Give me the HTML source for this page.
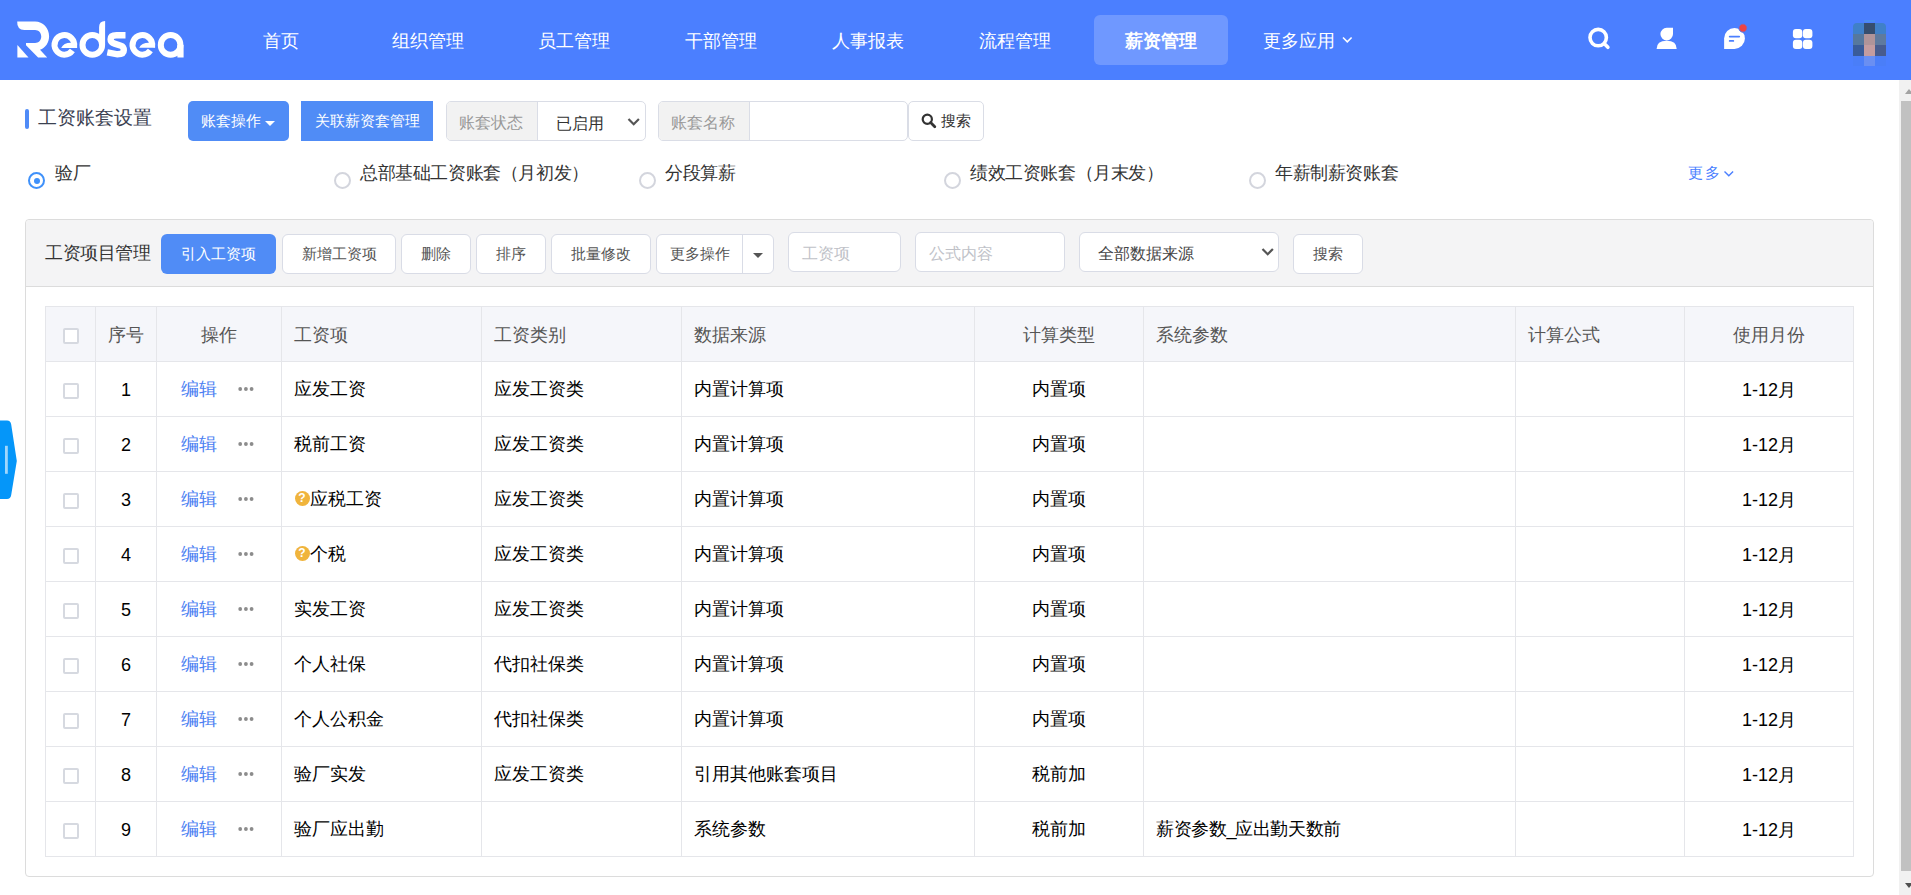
<!DOCTYPE html>
<html><head><meta charset="utf-8">
<style>
*{box-sizing:border-box;margin:0;padding:0}
html,body{width:1911px;height:895px;overflow:hidden;background:#fff;font-family:"Liberation Sans",sans-serif;}
.a{position:absolute;white-space:nowrap}
#hdr{position:absolute;left:0;top:0;width:1911px;height:80px;background:#4b7fff}
.nav{position:absolute;top:15px;height:50px;line-height:52px;font-size:18px;color:#fff;text-align:center;width:134px}
.nav.act{background:rgba(255,255,255,.2);border-radius:6px;font-weight:bold}
.btnp{position:absolute;background:#508cf6;color:#fff;font-size:15px;text-align:center}
.grp{position:absolute;border:1px solid #dadde6;border-radius:5px;background:#fff;overflow:hidden}
.addon{position:absolute;left:0;top:0;bottom:0;background:#f2f2f2;border-right:1px solid #dadde6;color:#999;font-size:16px;padding-top:2px}
.radio{position:absolute;width:17px;height:17px;border-radius:50%;border:2px solid #d3d5dd;background:#fff}
.radio.on{border-color:#3f91fa}
.radio.on:after{content:"";position:absolute;left:3.5px;top:3.5px;width:6px;height:6px;border-radius:50%;background:#3f91fa}
.rtxt{position:absolute;font-size:18px;color:#333;line-height:22px;letter-spacing:-0.4px}
#panel{position:absolute;left:25px;top:219px;width:1849px;height:658px;border:1px solid #dcdcdc;border-radius:4px;background:#fff}
#phead{position:absolute;left:0;top:0;width:1847px;height:67px;background:#f4f4f5;border-bottom:1px solid #dcdcdc;border-radius:4px 4px 0 0}
.btn{position:absolute;top:14px;height:40px;border:1px solid #d9dce6;border-radius:6px;background:#fff;color:#555;font-size:15px;line-height:38px;text-align:center}
.inp{position:absolute;top:12px;height:40px;border:1px solid #d9dce6;border-radius:6px;background:#fff;color:#c0c2c8;font-size:16px;line-height:42px}
table{position:absolute;left:45px;top:306px;border-collapse:collapse;table-layout:fixed}
td,th{border:1px solid #e5e6ea;height:55px;font-size:18px;color:#000;font-weight:normal;padding:0 0 0 12px;text-align:left}
th{background:#f5f6fa;color:#555;padding-top:2px}
td.c,th.c{text-align:center;padding:0}
th.c{padding-top:2px}
.cb{display:inline-block;width:16px;height:16px;border:2px solid #d6d9e0;border-radius:2px;background:#fff;vertical-align:middle;position:relative;top:1px}
.ed{color:#4a7ef2}
td.op{padding:0 0 0 24px}
.dots{display:inline-block;margin-left:21px;vertical-align:middle;position:relative;top:-1px}
.dots b{display:inline-block;width:4px;height:4px;border-radius:50%;background:#999;margin-right:1.5px;vertical-align:top}
.q{display:inline-block;width:15px;height:15px;border-radius:50%;background:#f0b43c;color:#fff;font-style:normal;font-weight:bold;font-size:12px;line-height:15px;text-align:center;vertical-align:middle;position:relative;top:-1.5px;margin-right:0;margin-left:-0.5px}
td.qi{padding-left:13px}
td.n{padding-top:2px}
</style></head><body>
<div id="hdr">
  <svg class="a" style="left:0;top:0" width="200" height="80" viewBox="0 0 200 80">
    <g fill="#fff">
      <path d="M17.2 21.4 H35.1 C43 21.4 49.1 27.8 49.1 36.2 C49.1 42.5 45.5 47.8 40 49.7 L47.2 57.6 H38.1 L26 45.3 V43 H35.1 C38.6 43 41.25 40.2 41.25 36.5 C41.25 32.8 38.6 30 35.1 30 H24.3 Q16.8 29.5 17.2 21.4 Z"/>
      <path d="M17.4 45 V57.6 H28.5 Z"/>
    </g>
    <g fill="none" stroke="#fff" stroke-width="6">
      <path d="M72.38 50.52 A9.8 9.8 0 1 1 73.94 46.94"/>
      <path d="M150.38 50.52 A9.8 9.8 0 1 1 151.94 46.94"/>
      <circle cx="92.3" cy="44.9" r="9.8"/>
      <circle cx="170.6" cy="44.9" r="9.8"/>
      <path d="M125.5 35.2 H116.5 Q110.6 35.2 110.6 39.3 Q110.6 42.4 114.5 43.6 L121 45.7 Q123.8 46.6 123.8 50.3 Q123.8 54.3 117.5 54.3 L107.3 52.4" stroke-width="6.4"/>
    </g>
    <g fill="#fff">
      <path d="M77.15 42.7 H70.9 Q63.5 42.7 61.2 47.9 H77.15 Z"/>
      <path d="M155.15 42.7 H148.9 Q141.5 42.7 139.2 47.8 H155.15 Z"/>
      <path d="M105.1 21 V45 H99.1 V27 Q99.1 21 105.1 21 Z"/>
      <rect x="177.4" y="44.9" width="6.2" height="12.6"/>
    </g>
  </svg>
  <div class="nav" style="left:214px">首页</div>
  <div class="nav" style="left:361px">组织管理</div>
  <div class="nav" style="left:507px">员工管理</div>
  <div class="nav" style="left:654px">干部管理</div>
  <div class="nav" style="left:801px">人事报表</div>
  <div class="nav" style="left:948px">流程管理</div>
  <div class="nav act" style="left:1094px">薪资管理</div>
  <div class="a" style="left:1262.5px;top:15px;line-height:52px;font-size:18px;color:#fff">更多应用</div>
  <svg class="a" style="left:1580px;top:15px" width="331" height="60" viewBox="1580 15 331 60">
    <g fill="none" stroke="#fff" stroke-width="3.6" stroke-linecap="round">
      <circle cx="1598.2" cy="37.6" r="8.2"/>
      <path d="M1604.4 43.8 L1607.9 47.3"/>
    </g>
    <g fill="#fff">
      <path d="M1673 27.8 V34.1 A6.3 6.3 0 1 1 1666.7 27.8 Z"/>
      <path d="M1656.6 48.9 Q1656.6 40.7 1666.6 40.7 Q1676.7 40.7 1676.7 48.9 Z"/>
      <path d="M1724.1 48.9 V38.4 A10.4 10.4 0 1 1 1734.5 48.9 Z"/>
      <rect x="1792.9" y="29.1" width="9.4" height="9.1" rx="3"/>
      <rect x="1802.9" y="29.1" width="9.5" height="9.1" rx="3"/>
      <rect x="1792.9" y="39.8" width="9.4" height="9.1" rx="3"/>
      <rect x="1802.9" y="39.8" width="9.5" height="9.1" rx="3"/>
    </g>
    <g fill="#4b7fff">
      <rect x="1728.8" y="35.7" width="11.3" height="1.8" rx=".9"/>
      <rect x="1728.8" y="40" width="5.4" height="1.8" rx=".9"/>
    </g>
    <circle cx="1743" cy="28" r="4.2" fill="#ee4343" stroke="#4b7fff" stroke-width="1"/>
  </svg>
  <svg class="a" style="left:1840px;top:15px" width="60" height="60" viewBox="1840 15 60 60">
    <defs><clipPath id="av"><rect x="1853" y="23" width="33" height="60" rx="4"/></clipPath></defs>
    <g clip-path="url(#av)">
      <rect x="1853" y="23" width="11" height="11" fill="#4080c8"/>
      <rect x="1864" y="23" width="11" height="11" fill="#364e6e"/>
      <rect x="1875" y="23" width="11" height="11" fill="#4080c8"/>
      <rect x="1853" y="34" width="11" height="11" fill="#56789e"/>
      <rect x="1864" y="34" width="11" height="11" fill="#b09499"/>
      <rect x="1875" y="34" width="11" height="11" fill="#5f7a9e"/>
      <rect x="1853" y="45" width="11" height="11" fill="#3a5c9a"/>
      <rect x="1864" y="45" width="11" height="11" fill="#c49ca0"/>
      <rect x="1875" y="45" width="11" height="11" fill="#485c8e"/>
      <rect x="1864" y="56" width="11" height="10" fill="#6a8ff2"/>
      <rect x="1853" y="56" width="11" height="10" fill="#4a7ef8"/>
      <rect x="1875" y="56" width="11" height="10" fill="#4a7ef8"/>
    </g>
    <rect x="1864" y="20" width="11" height="2" fill="#4d96e6" opacity=".6"/>
  </svg>
  <svg class="a" style="left:1342px;top:36px" width="11" height="9" viewBox="0 0 11 9"><path d="M1 1.5 L5.3 5.8 L9.6 1.5" fill="none" stroke="#fff" stroke-width="1.6"/></svg>
</div>

<div class="a" style="left:25px;top:109px;width:4px;height:20px;border-radius:2px;background:#4f8bf7"></div>
<div class="a" style="left:38px;top:106px;font-size:19px;line-height:24px;color:#3b4151">工资账套设置</div>
<div class="btnp" style="left:188px;top:101px;width:101px;height:40px;border-radius:5px;line-height:40px;text-align:left;padding-left:13px">账套操作</div>
<div class="a" style="left:265px;top:121px;width:0;height:0;border-left:5px solid transparent;border-right:5px solid transparent;border-top:5px solid #fff"></div>
<div class="btnp" style="left:301px;top:101px;width:132px;height:40px;line-height:40px">关联薪资套管理</div>

<div class="grp" style="left:446px;top:101px;width:200px;height:40px">
  <div class="addon" style="width:91px;line-height:38px;padding-left:12px">账套状态</div>
  <div class="a" style="left:108.5px;top:3px;line-height:38px;font-size:16px;color:#333">已启用</div>
  <svg class="a" style="left:180px;top:14.5px" width="14" height="10" viewBox="0 0 14 10"><path d="M1.5 2 L6.7 7.2 L11.9 2" fill="none" stroke="#555" stroke-width="2.2"/></svg>
</div>
<div class="grp" style="left:658px;top:101px;width:250px;height:40px">
  <div class="addon" style="width:91px;line-height:38px;padding-left:12px">账套名称</div>
</div>
<div class="grp" style="left:908px;top:101px;width:76px;height:40px">
  <svg class="a" style="left:12px;top:11px" width="16" height="16" viewBox="0 0 16 16"><circle cx="6.3" cy="6.3" r="4.6" fill="none" stroke="#333" stroke-width="2.2"/><path d="M9.6 9.6 L13.8 13.8" stroke="#333" stroke-width="2.8" stroke-linecap="round"/></svg>
  <div class="a" style="left:32px;top:0;line-height:38px;font-size:15px;color:#333">搜索</div>
</div>

<div class="radio on" style="left:28px;top:172px"></div>
<div class="rtxt" style="left:55px;top:162px">验厂</div>
<div class="radio" style="left:334px;top:172px"></div>
<div class="rtxt" style="left:360px;top:162px">总部基础工资账套（月初发）</div>
<div class="radio" style="left:639px;top:172px"></div>
<div class="rtxt" style="left:665px;top:162px">分段算薪</div>
<div class="radio" style="left:944px;top:172px"></div>
<div class="rtxt" style="left:970px;top:162px">绩效工资账套（月末发）</div>
<div class="radio" style="left:1249px;top:172px"></div>
<div class="rtxt" style="left:1275px;top:162px">年薪制薪资账套</div>
<div class="a" style="left:1688px;top:163px;font-size:15px;color:#4a7fff;line-height:20px;letter-spacing:1.5px">更多</div>
<svg class="a" style="left:1723px;top:170px" width="12" height="8" viewBox="0 0 12 8"><path d="M1.5 1.5 L5.8 5.8 L10.1 1.5" fill="none" stroke="#4a7fff" stroke-width="1.4"/></svg>

<div id="panel">
  <div id="phead">
    <div class="a" style="left:19px;top:21px;font-size:18px;color:#333;line-height:24px;letter-spacing:-0.4px">工资项目管理</div>
    <div class="btnp" style="left:135px;top:14px;width:115px;height:40px;border-radius:6px;line-height:40px">引入工资项</div>
    <div class="btn" style="left:256px;width:114px">新增工资项</div>
    <div class="btn" style="left:375px;width:70px">删除</div>
    <div class="btn" style="left:450px;width:70px">排序</div>
    <div class="btn" style="left:525px;width:100px">批量修改</div>
    <div class="btn" style="left:630px;width:118px;text-align:left;padding-left:13px">更多操作</div>
    <div class="a" style="left:716px;top:14px;width:1px;height:40px;background:#d9dce6"></div>
    <div class="a" style="left:727px;top:33px;width:0;height:0;border-left:5px solid transparent;border-right:5px solid transparent;border-top:5px solid #555"></div>
    <div class="inp" style="left:762px;width:113px;padding-left:13px">工资项</div>
    <div class="inp" style="left:889px;width:150px;padding-left:13px">公式内容</div>
    <div class="inp" style="left:1053px;width:200px;padding-left:18px;color:#444">全部数据来源</div>
    <svg class="a" style="left:1235px;top:27px" width="14" height="10" viewBox="0 0 14 10"><path d="M1.5 2 L6.7 7.2 L11.9 2" fill="none" stroke="#555" stroke-width="2.2"/></svg>
    <div class="btn" style="left:1267px;width:70px">搜索</div>
  </div>
</div>

<table>
<colgroup><col style="width:50px"><col style="width:61px"><col style="width:125px"><col style="width:200px"><col style="width:200px"><col style="width:293px"><col style="width:169px"><col style="width:372px"><col style="width:169px"><col style="width:169px"></colgroup>
<tr><th class="c" style="padding-top:0"><span class="cb"></span></th><th class="c">序号</th><th class="c">操作</th><th>工资项</th><th>工资类别</th><th>数据来源</th><th class="c">计算类型</th><th>系统参数</th><th>计算公式</th><th class="c">使用月份</th></tr>
<tr><td class="c"><span class="cb"></span></td><td class="c n">1</td><td class="op"><span class="ed">编辑</span><svg class="dots" width="16" height="6" viewBox="0 0 16 6"><circle cx="2.2" cy="3" r="1.9" fill="#8c8c8c"/><circle cx="7.9" cy="3" r="1.9" fill="#8c8c8c"/><circle cx="13.6" cy="3" r="1.9" fill="#8c8c8c"/></svg></td><td>应发工资</td><td>应发工资类</td><td>内置计算项</td><td class="c">内置项</td><td></td><td></td><td class="c n">1-12月</td></tr>
<tr><td class="c"><span class="cb"></span></td><td class="c n">2</td><td class="op"><span class="ed">编辑</span><svg class="dots" width="16" height="6" viewBox="0 0 16 6"><circle cx="2.2" cy="3" r="1.9" fill="#8c8c8c"/><circle cx="7.9" cy="3" r="1.9" fill="#8c8c8c"/><circle cx="13.6" cy="3" r="1.9" fill="#8c8c8c"/></svg></td><td>税前工资</td><td>应发工资类</td><td>内置计算项</td><td class="c">内置项</td><td></td><td></td><td class="c n">1-12月</td></tr>
<tr><td class="c"><span class="cb"></span></td><td class="c n">3</td><td class="op"><span class="ed">编辑</span><svg class="dots" width="16" height="6" viewBox="0 0 16 6"><circle cx="2.2" cy="3" r="1.9" fill="#8c8c8c"/><circle cx="7.9" cy="3" r="1.9" fill="#8c8c8c"/><circle cx="13.6" cy="3" r="1.9" fill="#8c8c8c"/></svg></td><td class="qi"><i class="q">?</i>应税工资</td><td>应发工资类</td><td>内置计算项</td><td class="c">内置项</td><td></td><td></td><td class="c n">1-12月</td></tr>
<tr><td class="c"><span class="cb"></span></td><td class="c n">4</td><td class="op"><span class="ed">编辑</span><svg class="dots" width="16" height="6" viewBox="0 0 16 6"><circle cx="2.2" cy="3" r="1.9" fill="#8c8c8c"/><circle cx="7.9" cy="3" r="1.9" fill="#8c8c8c"/><circle cx="13.6" cy="3" r="1.9" fill="#8c8c8c"/></svg></td><td class="qi"><i class="q">?</i>个税</td><td>应发工资类</td><td>内置计算项</td><td class="c">内置项</td><td></td><td></td><td class="c n">1-12月</td></tr>
<tr><td class="c"><span class="cb"></span></td><td class="c n">5</td><td class="op"><span class="ed">编辑</span><svg class="dots" width="16" height="6" viewBox="0 0 16 6"><circle cx="2.2" cy="3" r="1.9" fill="#8c8c8c"/><circle cx="7.9" cy="3" r="1.9" fill="#8c8c8c"/><circle cx="13.6" cy="3" r="1.9" fill="#8c8c8c"/></svg></td><td>实发工资</td><td>应发工资类</td><td>内置计算项</td><td class="c">内置项</td><td></td><td></td><td class="c n">1-12月</td></tr>
<tr><td class="c"><span class="cb"></span></td><td class="c n">6</td><td class="op"><span class="ed">编辑</span><svg class="dots" width="16" height="6" viewBox="0 0 16 6"><circle cx="2.2" cy="3" r="1.9" fill="#8c8c8c"/><circle cx="7.9" cy="3" r="1.9" fill="#8c8c8c"/><circle cx="13.6" cy="3" r="1.9" fill="#8c8c8c"/></svg></td><td>个人社保</td><td>代扣社保类</td><td>内置计算项</td><td class="c">内置项</td><td></td><td></td><td class="c n">1-12月</td></tr>
<tr><td class="c"><span class="cb"></span></td><td class="c n">7</td><td class="op"><span class="ed">编辑</span><svg class="dots" width="16" height="6" viewBox="0 0 16 6"><circle cx="2.2" cy="3" r="1.9" fill="#8c8c8c"/><circle cx="7.9" cy="3" r="1.9" fill="#8c8c8c"/><circle cx="13.6" cy="3" r="1.9" fill="#8c8c8c"/></svg></td><td>个人公积金</td><td>代扣社保类</td><td>内置计算项</td><td class="c">内置项</td><td></td><td></td><td class="c n">1-12月</td></tr>
<tr><td class="c"><span class="cb"></span></td><td class="c n">8</td><td class="op"><span class="ed">编辑</span><svg class="dots" width="16" height="6" viewBox="0 0 16 6"><circle cx="2.2" cy="3" r="1.9" fill="#8c8c8c"/><circle cx="7.9" cy="3" r="1.9" fill="#8c8c8c"/><circle cx="13.6" cy="3" r="1.9" fill="#8c8c8c"/></svg></td><td>验厂实发</td><td>应发工资类</td><td>引用其他账套项目</td><td class="c">税前加</td><td></td><td></td><td class="c n">1-12月</td></tr>
<tr><td class="c"><span class="cb"></span></td><td class="c n">9</td><td class="op"><span class="ed">编辑</span><svg class="dots" width="16" height="6" viewBox="0 0 16 6"><circle cx="2.2" cy="3" r="1.9" fill="#8c8c8c"/><circle cx="7.9" cy="3" r="1.9" fill="#8c8c8c"/><circle cx="13.6" cy="3" r="1.9" fill="#8c8c8c"/></svg></td><td>验厂应出勤</td><td></td><td>系统参数</td><td class="c">税前加</td><td><span style="letter-spacing:-0.35px">薪资参数<span style="letter-spacing:-1.5px">_</span>应出勤天数前</span></td><td></td><td class="c n">1-12月</td></tr>
</table>
<svg class="a" style="left:0;top:420px" width="18" height="80" viewBox="0 0 18 80"><path d="M0 0.6 H7 Q10.6 0.6 11.2 4.5 L16.8 41 L11.2 75 Q10.6 79 7 79 H0 Z" fill="#0596f9"/><rect x="5" y="25.8" width="2.8" height="28" fill="#a0d6fc"/></svg>
<div class="a" style="left:1899px;top:80px;width:12px;height:815px;background:#f1f1f1"></div>
<div class="a" style="left:1901px;top:101px;width:10px;height:770px;background:#c1c1c1"></div>
<div class="a" style="left:1905px;top:89px;width:0;height:0;border-left:4.5px solid transparent;border-right:4.5px solid transparent;border-bottom:5px solid #a3a3a3"></div>
<div class="a" style="left:1905px;top:883px;width:0;height:0;border-left:4.5px solid transparent;border-right:4.5px solid transparent;border-top:5px solid #505050"></div>

</body></html>
